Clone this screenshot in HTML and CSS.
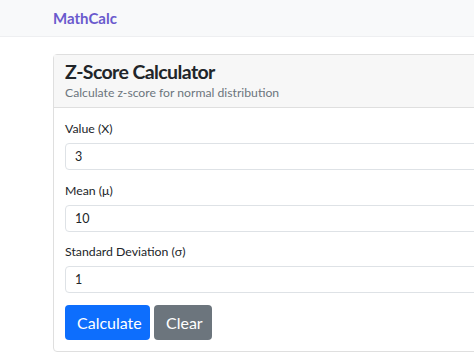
FILE: index.html
```html
<!DOCTYPE html>
<html lang="en">
<head>
    <meta charset="UTF-8">
    <meta name="viewport" content="width=device-width, initial-scale=1.0">
    <title>Z-Score Calculator</title>
    <link rel="stylesheet" href="styles.css">
</head>
<body>
    <nav class="navbar">
        <a class="brand" href="#">MathCalc</a>
    </nav>

    <div class="page">
        <div class="card">
            <div class="card-header">
                <h1 class="title">Z-Score Calculator</h1>
                <p class="subtitle">Calculate z-score for normal distribution</p>
            </div>
            <form class="card-body" id="zForm">
                <div class="field">
                    <label for="value">Value (X)</label>
                    <input type="text" id="value" value="3">
                </div>
                <div class="field">
                    <label for="mean">Mean (μ)</label>
                    <input type="text" id="mean" value="10">
                </div>
                <div class="field">
                    <label for="sd">Standard Deviation (σ)</label>
                    <input type="text" id="sd" value="1">
                </div>
                <div class="actions">
                    <button type="button" class="btn btn-primary">Calculate</button>
                    <button type="reset" class="btn btn-secondary">Clear</button>
                </div>
            </form>
        </div>
    </div>
</body>
</html>
```

FILE: styles.css
```css
html, body {
    margin: 0;
    overflow: hidden;
}
body {
    font-family: Lato, "Open Sans", sans-serif;
    background: #fff;
    color: #212529;
}
.navbar {
    height: 37px;
    box-sizing: border-box;
    background: #f8f9fa;
    border-bottom: 1px solid #eeeff1;
    padding-left: 53px;
    display: flex;
    align-items: center;
}
.brand {
    color: #6a5acd;
    font-weight: bold;
    font-size: 15px;
    text-decoration: none;
}
.page {
    padding: 17px 0 0 53px;
}
.card {
    width: 640px;
    border: 1px solid #dfdfdf;
    border-radius: 4px;
}
.card-header {
    background: #f7f7f7;
    border-bottom: 1px solid #dfdfdf;
    padding: 5px 11px 5px;
}
.title {
    margin: 0;
    font-size: 19.5px;
    line-height: 24px;
    font-weight: bold;
    letter-spacing: -0.6px;
    color: #212529;
}
.subtitle {
    margin: 0;
    font-size: 12.2px;
    line-height: 18px;
    color: #6c757d;
}
.card-body {
    padding: 12px 11px 11px;
}
.field {
    margin-bottom: 11.5px;
}
.field label {
    display: block;
    font-size: 12.3px;
    line-height: 18px;
    margin-bottom: 5px;
}
.field input {
    display: block;
    width: 100%;
    box-sizing: border-box;
    height: 27px;
    border: 1px solid #dee2e6;
    border-radius: 4px;
    padding: 0 9px;
    font-family: inherit;
    font-size: 12.5px;
    color: #212529;
}
.actions {
    display: flex;
    gap: 4px;
}
.btn {
    height: 35px;
    border: none;
    border-radius: 4px;
    color: #fff;
    font-family: inherit;
    font-size: 16px;
    padding: 0 12px;
    cursor: pointer;
}
.btn-primary {
    background: #0d6efd;
    width: 85px;
}
.btn-secondary {
    background: #6c757d;
    width: 58px;
}
```
